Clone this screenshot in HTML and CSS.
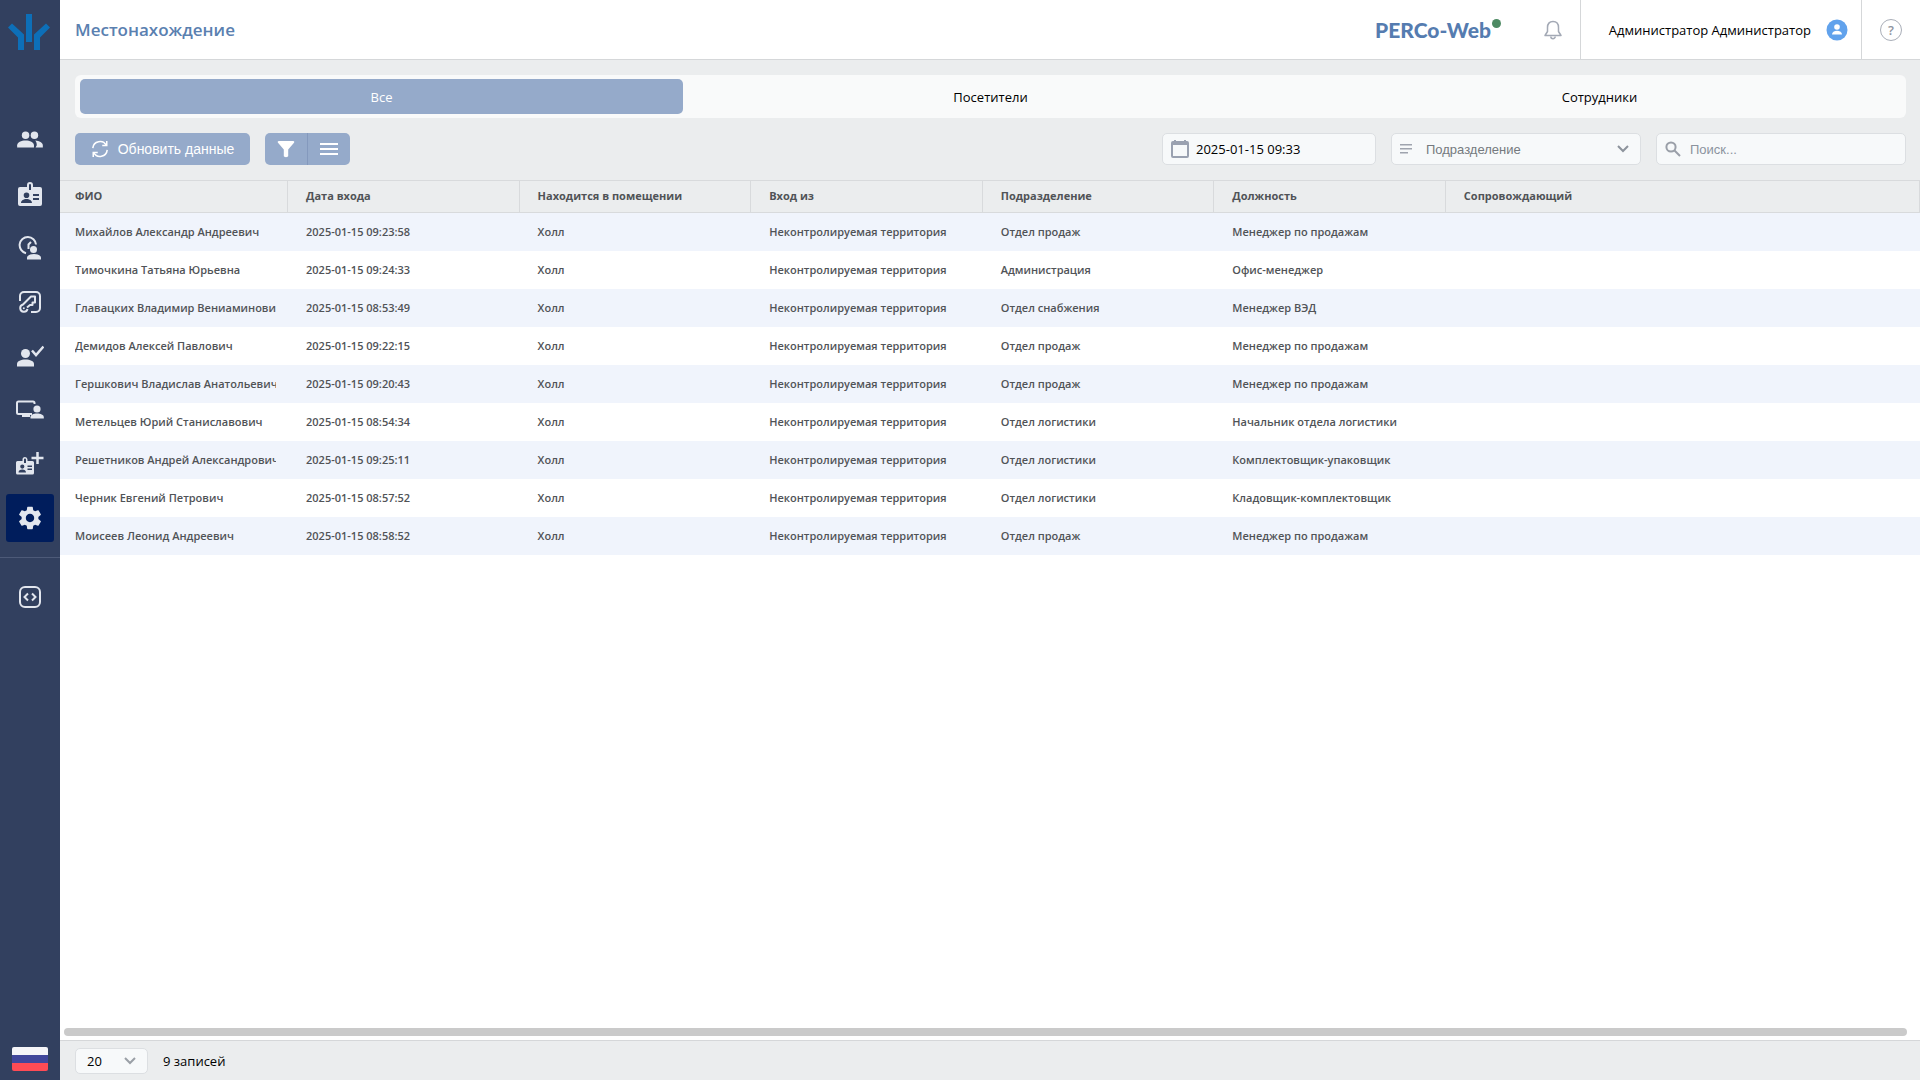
FILE: index.html
```html
<!DOCTYPE html>
<html lang="ru">
<head>
    <meta charset="UTF-8">
    <meta name="viewport" content="width=device-width, initial-scale=1.0">
    <title>Местонахождение</title>
    <link rel="stylesheet" href="styles.css">
</head>
<body>

<aside class="sidebar">
    <a href="#" class="logo" aria-label="PERCo">
        <svg width="42" height="36" viewBox="0 0 42 36" fill="#0d6fb8">
            <path d="M18 0h6v28h-6z"/>
            <path d="M0 13.500l4-4L16 20.500V36h-6V23.500z"/>
            <path d="M42 13.500l-4-4L26 20.500V36h6V23.500z"/>
        </svg>
    </a>

    <nav class="menu">
        <a href="#" class="menu-item" aria-label="Персонал">
            <svg width="28" height="28" viewBox="0 0 24 24" fill="currentColor">
                <circle cx="8.200" cy="8" r="3.200"/>
                <circle cx="15.800" cy="8" r="3.200"/>
                <path d="M1 18.500v-2c0-2.400 3.500-4 7.200-4s7.200 1.600 7.200 4v2z"/>
                <path d="M16.800 18.500H23v-2c0-2.200-3-3.700-6.500-4 .9.900 1.300 2.200 1.300 4z" />
            </svg>
        </a>
        <a href="#" class="menu-item" aria-label="Бюро пропусков">
            <svg width="24" height="24" viewBox="0 0 24 24">
                <path fill="currentColor" fill-rule="evenodd" d="M9 5V3a3 3 0 0 1 6 0v2h7a2 2 0 0 1 2 2v15a2 2 0 0 1-2 2H2a2 2 0 0 1-2-2V7a2 2 0 0 1 2-2zm2-2v5h2V3a1 1 0 0 0-2 0zM3 21h11c0-2.400-2.500-4-5.500-4S3 18.600 3 21zM8.500 10.500a2.800 2.800 0 1 0 0 5.600 2.800 2.800 0 0 0 0-5.600zM15 12v2h6v-2zm0 4v2h6v-2z"/>
            </svg>
        </a>
        <a href="#" class="menu-item" aria-label="Учет рабочего времени">
            <svg width="24" height="24" viewBox="0 0 24 24" fill="none" stroke="currentColor" stroke-width="2">
                <path d="M8 17.200A8.200 8.200 0 1 1 18 8.500"/>
                <path d="M13 6l-2.500 2.500V13"/>
                <circle cx="15.500" cy="13.500" r="3.500" fill="currentColor" stroke="none"/>
                <path d="M9 23.500v-1.500c0-2.500 3-4 7-4s7 1.500 7 4v1.500z" fill="currentColor" stroke="none"/>
            </svg>
        </a>
        <a href="#" class="menu-item" aria-label="Контроль доступа">
            <svg width="24" height="24" viewBox="0 0 24 24" fill="none" stroke="currentColor" stroke-width="2" stroke-linejoin="round">
                <path d="M2 11V6a4 4 0 0 1 4-4h12a4 4 0 0 1 4 4v12a4 4 0 0 1-4 4h-5"/>
                <path d="M9.500 19a3.700 3.700 0 1 1-4.500-4.500l8-8H17v6h-2.500V15H12L9 17.500"/>
                <circle cx="5.800" cy="18.300" r="1" fill="currentColor" stroke="none"/>
            </svg>
        </a>
        <a href="#" class="menu-item" aria-label="Верификация">
            <svg width="28" height="24" viewBox="0 0 28 24" fill="currentColor">
                <circle cx="9.500" cy="9.500" r="4.500"/>
                <path d="M1 22.500V20c0-3 4-4.500 8.500-4.500S18 17 18 20v2.500z"/>
                <path d="M16 6.500l4 4.500 7.500-8.500" fill="none" stroke="currentColor" stroke-width="2.500"/>
            </svg>
        </a>
        <a href="#" class="menu-item" aria-label="Мониторинг">
            <svg width="28" height="24" viewBox="0 0 28 24" fill="currentColor">
                <path d="M18.500 6V5a1.500 1.500 0 0 0-1.500-1.500H2.500A1.500 1.500 0 0 0 1 5v9.500A1.500 1.500 0 0 0 2.500 16H16" fill="none" stroke="currentColor" stroke-width="2"/>
                <path d="M6 17h8v2H6z"/>
                <circle cx="21" cy="11" r="3.600"/>
                <path d="M14.500 20.500v-1.300c0-2.400 3-3.700 6.500-3.700s6.800 1.300 6.800 3.700v1.300z"/>
            </svg>
        </a>
        <a href="#" class="menu-item" aria-label="Заказ пропуска">
            <svg width="28" height="24" viewBox="0 0 28 24">
                <path fill="currentColor" fill-rule="evenodd" d="M6.500 9V7.500a2.500 2.500 0 0 1 5 0V9h5a1.500 1.500 0 0 1 1.500 1.500v10.500a1.500 1.500 0 0 1-1.500 1.500h-15A1.500 1.500 0 0 1 0 21V10.500A1.500 1.500 0 0 1 1.500 9zM8 7.500V11h2V7.500a1 1 0 0 0-2 0zM2.500 20.500H10c0-2-1.500-3-3.700-3s-3.800 1-3.800 3zM6.300 12.500a2.100 2.100 0 1 0 0 4.200 2.100 2.100 0 0 0 0-4.200zM11.500 13.500V15H16v-1.500zm0 3V18H16v-1.500z"/>
                <path d="M21.500 0v12M15.500 6h12" fill="none" stroke="currentColor" stroke-width="2.500"/>
            </svg>
        </a>
        <a href="#" class="menu-item active" aria-label="Администрирование">
            <svg width="28" height="28" viewBox="0 0 24 24" fill="currentColor">
                <path d="M19.140 12.940c.04-.3.06-.61.06-.94 0-.32-.02-.64-.07-.94l2.030-1.580c.18-.14.23-.41.12-.61l-1.920-3.320c-.12-.22-.37-.29-.59-.22l-2.390.96c-.5-.38-1.030-.7-1.620-.94l-.36-2.540c-.04-.24-.24-.41-.48-.41h-3.840c-.24 0-.43.17-.47.41l-.36 2.540c-.59.24-1.130.57-1.620.94l-2.390-.96c-.22-.08-.47 0-.59.22L2.740 8.870c-.12.21-.08.47.12.61l2.030 1.580c-.05.3-.09.63-.09.94s.02.64.07.94l-2.030 1.580c-.18.14-.23.41-.12.61l1.920 3.320c.12.22.37.29.59.22l2.390-.96c.5.38 1.030.7 1.620.94l.36 2.540c.05.24.24.41.48.41h3.840c.24 0 .44-.17.47-.41l.36-2.540c.59-.24 1.130-.56 1.620-.94l2.390.96c.22.08.47 0 .59-.22l1.920-3.320c.12-.22.07-.47-.12-.61l-2.010-1.580zM12 15.600c-1.980 0-3.600-1.620-3.600-3.600s1.620-3.600 3.600-3.600 3.600 1.620 3.600 3.600-1.620 3.600-3.600 3.600z"/>
            </svg>
        </a>
    </nav>

    <nav class="menu menu-extra">
        <a href="#" class="menu-item" aria-label="API">
            <svg width="22" height="22" viewBox="0 0 22 22" fill="none" stroke="currentColor" stroke-width="2">
                <rect x="1" y="1" width="20" height="20" rx="5"/>
                <path d="M9 7.500L5.500 11 9 14.500M13 7.500l3.500 3.500-3.500 3.500"/>
            </svg>
        </a>
    </nav>

    <button class="lang" aria-label="Русский">
        <span class="flag"></span>
    </button>
</aside>

<div class="page">
    <header class="header">
        <h1 class="title">Местонахождение</h1>
        <a href="#" class="brand">PERCo-Web<span class="brand-dot"></span></a>
        <button class="bell" aria-label="Уведомления">
            <svg width="20" height="20" viewBox="0 0 20 20" fill="none" stroke="#a3a9b5" stroke-width="1.500" stroke-linejoin="round">
                <path d="M10 1.500c-3.600 0-5.500 2.600-5.500 6v4L2 15.500h16l-2.500-4v-4c0-3.400-1.900-6-5.500-6z"/>
                <path d="M7.800 16.500a2.200 2.200 0 0 0 4.400 0"/>
            </svg>
        </button>
        <button class="user">
            Администратор Администратор
            <svg width="22" height="22" viewBox="0 0 22 22">
                <circle cx="11" cy="11" r="10.500" fill="#61a2ec"/>
                <circle cx="11" cy="8" r="2.800" fill="#fff"/>
                <path d="M6 15.500c0-2.200 2.200-3.700 5-3.700s5 1.500 5 3.700z" fill="#fff"/>
            </svg>
        </button>
        <button class="help" aria-label="Справка"><span class="help-mark">?</span></button>
    </header>

    <div class="controls">
        <div class="tabs">
            <button class="tab active">Все</button>
            <button class="tab">Посетители</button>
            <button class="tab">Сотрудники</button>
        </div>

        <div class="toolbar">
            <button class="btn refresh">
                <svg width="18" height="18" viewBox="0 0 20 20" fill="none" stroke="#fff" stroke-width="1.700">
                    <path d="M2 9a8 8 0 0 1 15-3M18 11a8 8 0 0 1-15 3"/>
                    <path d="M17.500 1v5h-5M2.500 19v-5h5"/>
                </svg>
                Обновить данные
            </button>
            <div class="btn-group">
                <button class="btn" aria-label="Фильтр">
                    <svg width="18" height="18" viewBox="0 0 18 18" fill="#fff">
                        <path d="M1.800 1h14.400c1 0 1.400 1 .8 1.700L11.200 9.500V16c0 1.500-4.400 1.500-4.400 0V9.500L1 2.700C.4 2 .8 1 1.800 1z"/>
                    </svg>
                </button>
                <button class="btn" aria-label="Меню">
                    <svg width="18" height="14" viewBox="0 0 18 14" fill="#fff">
                        <path d="M0 1h18v2H0zM0 6h18v2H0zM0 11h18v2H0z"/>
                    </svg>
                </button>
            </div>

            <div class="field field-date">
                <svg width="18" height="18" viewBox="0 0 18 18">
                    <path fill="#9aa1b0" fill-rule="evenodd" d="M3 0h2v1h8V0h2v1h1a2 2 0 0 1 2 2v13a2 2 0 0 1-2 2H2a2 2 0 0 1-2-2V3a2 2 0 0 1 2-2h1zM2 5v11h14V5z"/>
                </svg>
                <input type="text" value="2025-01-15 09:33" aria-label="Дата и время">
            </div>
            <div class="field field-select">
                <svg width="12" height="10" viewBox="0 0 12 10" fill="#9fa4ae">
                    <path d="M0 0h12v1.500H0zM0 4h12v1.500H0zM0 8h8v1.500H0z"/>
                </svg>
                <select aria-label="Подразделение">
                    <option>Подразделение</option>
                </select>
                <svg class="arrow" width="12" height="8" viewBox="0 0 12 8" fill="none" stroke="#8d939c" stroke-width="2">
                    <path d="M1 1l5 5 5-5"/>
                </svg>
            </div>
            <div class="field field-search">
                <svg width="16" height="16" viewBox="0 0 16 16" fill="none" stroke="#9a9fa8" stroke-width="2">
                    <circle cx="6" cy="6" r="4.600"/>
                    <path d="M9.500 9.500l5.500 5.500"/>
                </svg>
                <input type="text" placeholder="Поиск..." aria-label="Поиск">
            </div>
        </div>
    </div>

    <main class="table-wrap">
        <table class="table">
            <thead>
                <tr>
                    <th>ФИО</th>
                    <th>Дата входа</th>
                    <th>Находится в помещении</th>
                    <th>Вход из</th>
                    <th>Подразделение</th>
                    <th>Должность</th>
                    <th class="last">Сопровождающий</th>
                </tr>
            </thead>
            <tbody>
                <tr><td><div class="name">Михайлов Александр Андреевич</div></td><td>2025-01-15 09:23:58</td><td>Холл</td><td>Неконтролируемая территория</td><td>Отдел продаж</td><td>Менеджер по продажам</td><td></td></tr>
                <tr><td><div class="name">Тимочкина Татьяна Юрьевна</div></td><td>2025-01-15 09:24:33</td><td>Холл</td><td>Неконтролируемая территория</td><td>Администрация</td><td>Офис-менеджер</td><td></td></tr>
                <tr><td><div class="name">Главацких Владимир Вениаминович</div></td><td>2025-01-15 08:53:49</td><td>Холл</td><td>Неконтролируемая территория</td><td>Отдел снабжения</td><td>Менеджер ВЭД</td><td></td></tr>
                <tr><td><div class="name">Демидов Алексей Павлович</div></td><td>2025-01-15 09:22:15</td><td>Холл</td><td>Неконтролируемая территория</td><td>Отдел продаж</td><td>Менеджер по продажам</td><td></td></tr>
                <tr><td><div class="name">Гершкович Владислав Анатольевич</div></td><td>2025-01-15 09:20:43</td><td>Холл</td><td>Неконтролируемая территория</td><td>Отдел продаж</td><td>Менеджер по продажам</td><td></td></tr>
                <tr><td><div class="name">Метельцев Юрий Станиславович</div></td><td>2025-01-15 08:54:34</td><td>Холл</td><td>Неконтролируемая территория</td><td>Отдел логистики</td><td>Начальник отдела логистики</td><td></td></tr>
                <tr><td><div class="name">Решетников Андрей Александрович</div></td><td>2025-01-15 09:25:11</td><td>Холл</td><td>Неконтролируемая территория</td><td>Отдел логистики</td><td>Комплектовщик-упаковщик</td><td></td></tr>
                <tr><td><div class="name">Черник Евгений Петрович</div></td><td>2025-01-15 08:57:52</td><td>Холл</td><td>Неконтролируемая территория</td><td>Отдел логистики</td><td>Кладовщик-комплектовщик</td><td></td></tr>
                <tr><td><div class="name">Моисеев Леонид Андреевич</div></td><td>2025-01-15 08:58:52</td><td>Холл</td><td>Неконтролируемая территория</td><td>Отдел продаж</td><td>Менеджер по продажам</td><td></td></tr>
            </tbody>
        </table>
        <div class="scrollbar"></div>
    </main>

    <footer class="footer">
        <div class="field page-size">
            <select aria-label="Записей на странице">
                <option>20</option>
            </select>
            <svg class="arrow" width="12" height="8" viewBox="0 0 12 8" fill="none" stroke="#9a9fa6" stroke-width="2">
                <path d="M1 1l5 5 5-5"/>
            </svg>
        </div>
        <span class="count">9 записей</span>
    </footer>
</div>

</body>
</html>
```

FILE: styles.css
```css
* {
    box-sizing: border-box;
}

body {
    display: flex;
    height: 100vh;
    margin: 0;
    font-family: 'Open Sans', 'Noto Sans', sans-serif;
    font-size: 13px;
    color: #000;
    background-color: #fff;
}

button {
    padding: 0;
    border: none;
    background: none;
    font: inherit;
    color: inherit;
    cursor: pointer;
}

svg {
    display: block;
    flex: none;
}

/* Sidebar */
.sidebar {
    display: flex;
    flex-direction: column;
    align-items: center;
    flex: none;
    width: 60px;
    padding-bottom: 9px;
    background-color: #32405f;
}

.logo {
    height: 116px;
    padding: 14px 2px 0 0;
}

.menu {
    display: flex;
    flex-direction: column;
    align-items: center;
    gap: 6px;
    width: 100%;
    padding-bottom: 15px;
}

.menu-item {
    display: flex;
    align-items: center;
    justify-content: center;
    width: 48px;
    height: 48px;
    border-radius: 3px;
    color: #e2e6ee;
}

.menu-item.active {
    background-color: #001d5c;
}

.menu-extra {
    padding-top: 15px;
    border-top: 1px solid #4d5a78;
}

.lang {
    margin-top: auto;
}

.flag {
    display: block;
    width: 36px;
    height: 24px;
    border-radius: 2px;
    background: linear-gradient(#f5f5f8 33%, #41479b 33% 67%, #ff4b55 67%);
}

.page {
    display: flex;
    flex-direction: column;
    flex: 1;
    min-width: 0;
}

/* Header */
.header {
    display: flex;
    align-items: center;
    height: 60px;
    border-bottom: 1px solid #d5d7d9;
}

.title {
    flex: 1;
    margin: 0;
    padding-left: 15px;
    font-size: 17px;
    font-weight: 600;
    color: #5a80b0;
}

.brand {
    position: relative;
    font-family: Lato, sans-serif;
    font-size: 21px;
    font-weight: 900;
    color: #557cb0;
    text-decoration: none;
}

.brand-dot {
    position: absolute;
    top: 2px;
    right: -10px;
    width: 9px;
    height: 9px;
    border-radius: 50%;
    background-color: #4d8a63;
}

.bell {
    padding: 0 17px 0 52px;
}

.user {
    display: flex;
    align-items: center;
    justify-content: flex-end;
    gap: 15px;
    width: 282px;
    height: 100%;
    padding-right: 13px;
    border: solid #d5d7d9;
    border-width: 0 1px;
}

.help {
    width: 58px;
    height: 100%;
}

.help-mark {
    display: block;
    width: 22px;
    margin: 0 auto;
    border: 1px solid #a9aeb8;
    border-radius: 50%;
    line-height: 20px;
    font-weight: 600;
    color: #8e949f;
}

/* Tabs and toolbar */
.controls {
    padding: 15px 14px 15px 15px;
    background-color: #ebedee;
}

.tabs {
    display: flex;
    gap: 6px;
    margin-bottom: 15px;
    padding: 4px 5px;
    border-radius: 6px;
    background-color: #f9fafa;
}

.tab {
    flex: 1;
    height: 35px;
    border-radius: 5px;
}

.tab.active {
    background-color: #95aaca;
    color: #fff;
}

.toolbar {
    display: flex;
    gap: 15px;
}

.btn {
    display: flex;
    align-items: center;
    justify-content: center;
    height: 32px;
    border-radius: 5px;
    background-color: #95aaca;
    color: #fff;
}

.refresh {
    gap: 9px;
    width: 175px;
    font-family: 'Liberation Sans', Arial, sans-serif;
    font-size: 14px;
}

.btn-group {
    display: flex;
    margin-right: auto;
}

.btn-group .btn {
    width: 43px;
}

.btn-group .btn:first-child {
    width: 42px;
    border-radius: 5px 0 0 5px;
}

.btn-group .btn:last-child {
    border-left: 1px solid #8499bd;
    border-radius: 0 5px 5px 0;
}

.field {
    position: relative;
    display: flex;
    align-items: center;
    height: 32px;
    padding-left: 8px;
    border: 1px solid #dcdfe2;
    border-radius: 5px;
    background-color: #f7f9fa;
}

.field input,
.field select {
    flex: 1;
    min-width: 0;
    height: 100%;
    padding: 0;
    border: none;
    outline: none;
    background: none;
    font: 13px 'Liberation Sans', Arial, sans-serif;
    color: #75797e;
    appearance: none;
}

.field input::placeholder {
    color: #8b939e;
}

.arrow {
    position: absolute;
    right: 11px;
    pointer-events: none;
}

.field-date {
    gap: 7px;
    width: 214px;
}

.field-date input {
    font-family: 'Open Sans', 'Noto Sans', sans-serif;
    color: #000;
}

.field-select {
    gap: 14px;
    width: 250px;
}

.field-search {
    gap: 9px;
    width: 250px;
}

/* Table */
.table-wrap {
    display: flex;
    flex-direction: column;
    flex: 1;
    min-height: 0;
}

.table {
    width: 100%;
    border-collapse: separate;
    border-spacing: 0;
    table-layout: fixed;
    font-size: 11px;
    font-weight: 600;
    color: #505357;
}

.table th,
.table td {
    width: 12.45%;
    padding: 0 0 2px 18px;
    text-align: left;
    white-space: nowrap;
    overflow: hidden;
}

.table th {
    height: 33px;
    border: solid #d8dadc;
    border-width: 1px 1px 1px 0;
    background-color: #ebedee;
    font-weight: 700;
}

.table td {
    height: 38px;
}

.table th:first-child,
.table td:first-child {
    width: 12.26%;
    padding: 0 12px 2px 15px;
}

.table th.last {
    width: auto;
}

.table tbody tr:nth-child(odd) {
    background-color: #f0f4fc;
}

.name {
    overflow: hidden;
}

.scrollbar {
    height: 8px;
    margin: auto 13px 4px 4px;
    border-radius: 4px;
    background-color: #cacaca;
}

/* Footer */
.footer {
    display: flex;
    align-items: center;
    gap: 15px;
    height: 40px;
    padding-left: 15px;
    border-top: 1px solid #d5d7d9;
    background-color: #ebedee;
}

.page-size {
    width: 73px;
    height: 26px;
    padding-left: 11px;
}

.page-size select {
    font-family: 'Open Sans', 'Noto Sans', sans-serif;
    color: #000;
}
```
